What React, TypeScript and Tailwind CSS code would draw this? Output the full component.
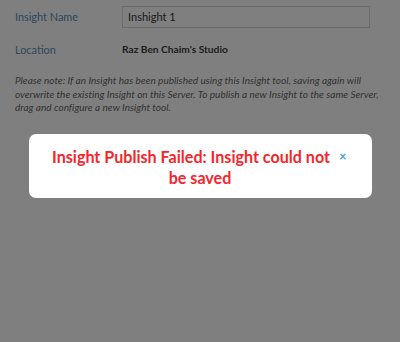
import React from "react";

export default function App() {
  return (
    <div className="relative w-[400px] h-[342px] bg-white overflow-hidden" style={{ fontFamily: 'Lato, "Open Sans", sans-serif' }}>
      <div className="px-[15px] pt-[6px]">
        <div className="flex items-center h-[22px]">
          <div className="w-[107px] text-[10.9px] text-[#5a8fb8]">Insight Name</div>
          <div className="w-[248px] h-[22px] border border-[#d4d4d4] flex items-center pl-[5px] text-[11px] text-[#333]">Inshight 1</div>
        </div>
        <div className="flex items-center h-[20px] mt-[12px]">
          <div className="w-[107px] text-[10.9px] text-[#5a8fb8]">Location</div>
          <div className="text-[10.2px] font-bold text-[#3a3a3a]">Raz Ben Chaim's Studio</div>
        </div>
        <p className="mt-[14px] text-[10px] tracking-[0.02px] italic leading-[13.5px] text-[#666] w-[368px]">
          Please note: If an Insight has been published using this Insight tool, saving again will overwrite the existing Insight on this Server. To publish a new Insight to the same Server, drag and configure a new Insight tool.
        </p>
      </div>
      <div className="absolute inset-0 bg-black/50 flex items-start justify-center pt-[134px]">
        <div className="w-[343px] h-[64px] bg-white rounded-[7px] px-[20px] pt-[12px]">
          <div className="text-center text-[16.1px] font-bold leading-[21px] text-[#f5262b]">
            <span className="float-right w-[18px] text-right pr-[5px] text-[13px] leading-[21px] text-[#4aa3df]">×</span>
            Insight Publish Failed: Insight could not be saved
          </div>
        </div>
      </div>
    </div>
  );
}
